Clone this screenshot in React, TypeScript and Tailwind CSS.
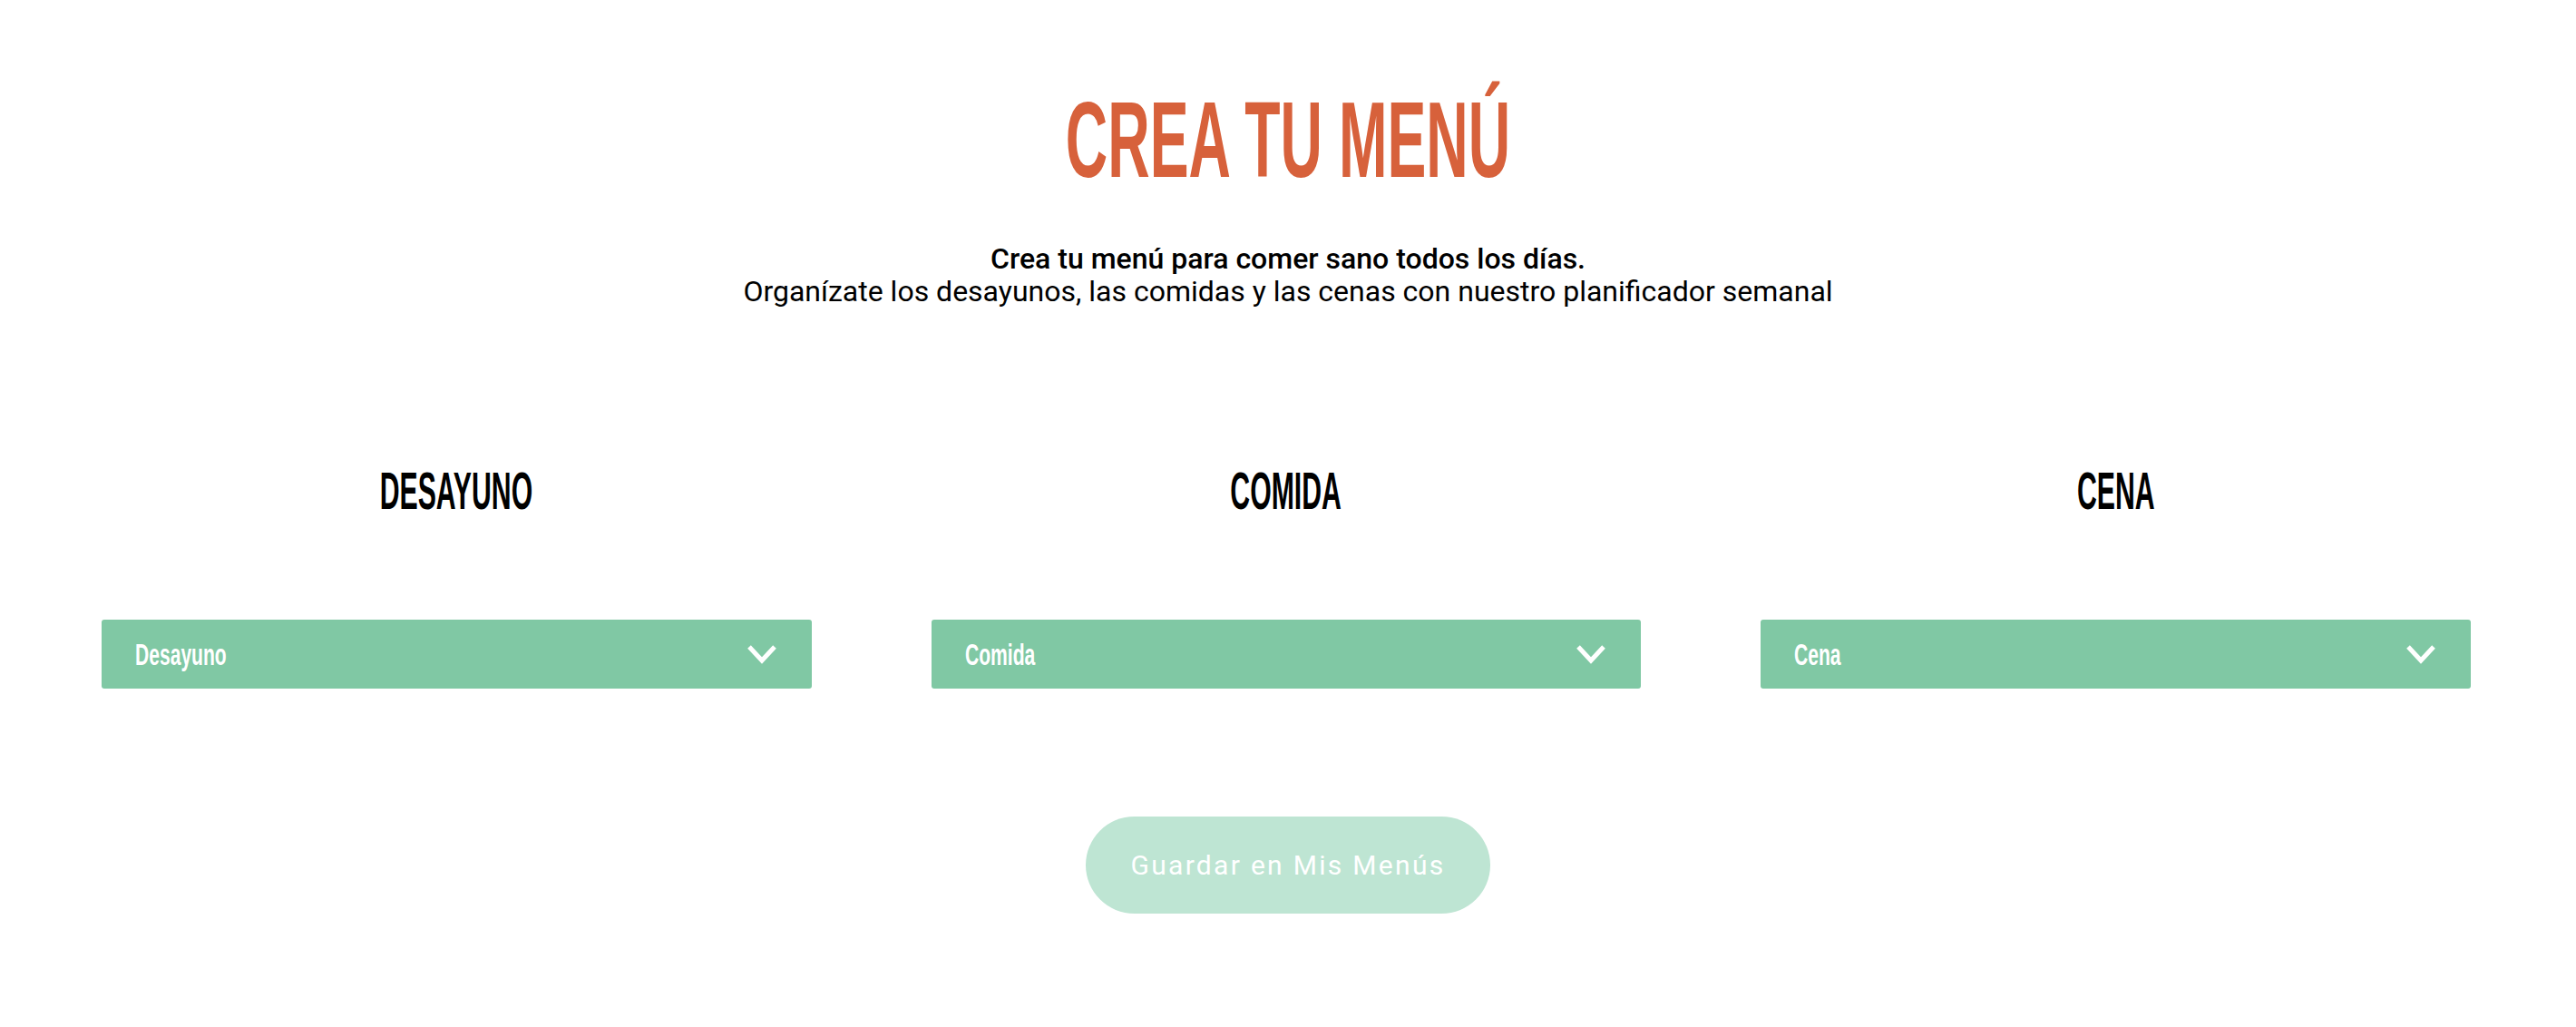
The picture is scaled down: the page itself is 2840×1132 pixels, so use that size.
const meals = ['Desayuno', 'Comida', 'Cena'];

function Chevron() {
  return (
    <svg width="34" height="22" viewBox="0 0 34 22" fill="none">
      <polyline points="3,3 17,18 31,3" stroke="white" strokeWidth="5" strokeLinejoin="miter" />
    </svg>
  );
}

function MealColumn({ name }: { name: string }) {
  return (
    <div className="flex flex-col items-center">
      <h2 className="text-[57px] leading-none font-bold text-black font-['Liberation_Sans',sans-serif]">
        <span className="inline-block scale-x-[0.53] origin-center">{name.toUpperCase()}</span>
      </h2>
      <button className="mt-[113px] w-full h-[76px] bg-[#80c8a4] rounded-[3px] flex items-center justify-between pl-[37px] pr-[38px]">
        <span className="inline-block text-[34px] leading-none font-bold text-white font-['Liberation_Sans',sans-serif] scale-x-[0.62] origin-left">
          {name}
        </span>
        <Chevron />
      </button>
    </div>
  );
}

export default function App() {
  return (
    <div className="min-h-screen bg-white flex flex-col items-center">
      <h1 className="mt-[94px] text-[119px] leading-none font-bold text-[#d7613b] font-['Liberation_Sans',sans-serif]">
        <span className="inline-block scale-x-[0.54] origin-center">CREA TU MENÚ</span>
      </h1>

      <div className="mt-[54px] text-center text-black text-[32px] leading-[36px] font-['Roboto',sans-serif]">
        <p className="font-medium">Crea tu menú para comer sano todos los días.</p>
        <p>Organízate los desayunos, las comidas y las cenas con nuestro planificador semanal</p>
      </div>

      <div className="mt-[174px] w-full grid grid-cols-3 gap-x-[132px] pl-[112px] pr-[116px]">
        {meals.map((m) => (
          <MealColumn key={m} name={m} />
        ))}
      </div>

      <button className="mt-[141px] h-[107px] w-[446px] rounded-full bg-[#bee5d3] text-white text-[30px] tracking-[2.3px] font-['Roboto',sans-serif]">
        Guardar en Mis Menús
      </button>
    </div>
  );
}
